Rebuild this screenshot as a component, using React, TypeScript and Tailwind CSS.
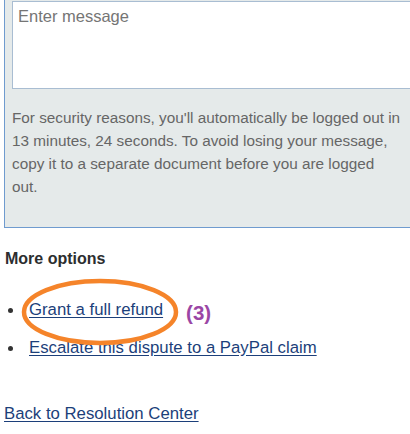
export default function App() {
  const font = { fontFamily: '"Liberation Sans", Arial, sans-serif' };
  return (
    <div className="w-[410px] h-[434px] overflow-hidden bg-white pl-[4px]" style={font}>
      {/* Message panel */}
      <div className="w-[430px] h-[228px] bg-[#e5eaea] border-l border-b border-[#6f9bcf] pl-[7px] pt-[1px]">
        <textarea
          placeholder="Enter message"
          className="block w-[420px] h-[88px] bg-white border border-[#a9bdd2] px-[5px] pt-[2px] text-[16.5px] leading-[24px] text-[#333] placeholder:text-[#757575] resize-none outline-none"
          style={font}
        />
        <p className="mt-[17px] w-[392px] text-[15.3px] leading-[23px] text-[#666]">
          For security reasons, you'll automatically be logged out in 13 minutes, 24 seconds. To avoid losing your message, copy it to a separate document before you are logged out.
        </p>
      </div>

      {/* More options */}
      <h3 className="mt-[21px] pl-[1px] text-[16px] font-bold leading-[20px] text-[#2c2e2f]">More options</h3>

      <ul className="relative mt-[30px] flex flex-col gap-[16px] text-[16.75px] leading-[22px]">
        <li className="flex items-center h-[22px]">
          <span className="ml-[4px] w-[5px] h-[5px] rounded-full bg-[#333]" />
          <a href="#" className="ml-[16px] text-[#1c3f7a] underline underline-offset-[2px]">Grant a full refund</a>
          <span className="ml-[23px] mt-[6px] text-[20.5px] font-bold text-[#9b46a5]">(3)</span>
        </li>
        <li className="flex items-center h-[22px]">
          <span className="ml-[4px] w-[5px] h-[5px] rounded-full bg-[#333]" />
          <a href="#" className="ml-[16px] text-[#1c3f7a] underline underline-offset-[2px]">Escalate this dispute to a PayPal claim</a>
        </li>
        {/* annotation ellipse */}
        <svg className="absolute left-[16px] top-[-21px] pointer-events-none" width="160" height="70" viewBox="0 0 160 70">
          <ellipse cx="80" cy="34" rx="76" ry="31" fill="none" stroke="#f5842a" strokeWidth="4.5" />
        </svg>
      </ul>

      <a href="#" className="block mt-[44px] w-max text-[16.75px] leading-[22px] text-[#1c3f7a] underline underline-offset-[2px]">
        Back to Resolution Center
      </a>
    </div>
  );
}
